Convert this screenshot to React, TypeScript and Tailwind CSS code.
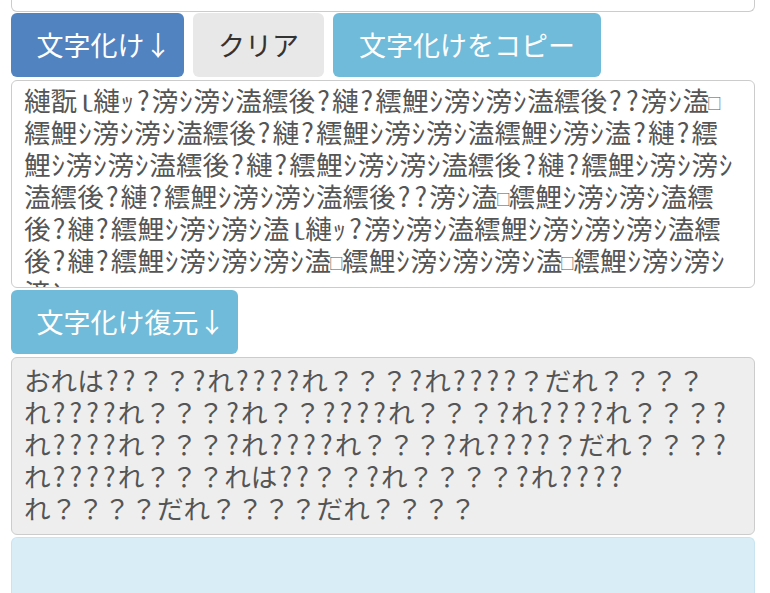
import type { ReactNode } from 'react';

const garbled = [
  '縺翫ｌ縺ｯ?滂ｼ滂ｼ溘繧後?縺?繧鯉ｼ滂ｼ滂ｼ溘繧後??滂ｼ溘□',
  '繧鯉ｼ滂ｼ滂ｼ溘繧後?縺?繧鯉ｼ滂ｼ滂ｼ溘繧鯉ｼ滂ｼ溘?縺?繧',
  '鯉ｼ滂ｼ滂ｼ溘繧後?縺?繧鯉ｼ滂ｼ滂ｼ溘繧後?縺?繧鯉ｼ滂ｼ滂ｼ',
  '溘繧後?縺?繧鯉ｼ滂ｼ滂ｼ溘繧後??滂ｼ溘□繧鯉ｼ滂ｼ滂ｼ溘繧',
  '後?縺?繧鯉ｼ滂ｼ滂ｼ溘ｌ縺ｯ?滂ｼ滂ｼ溘繧鯉ｼ滂ｼ滂ｼ滂ｼ溘繧',
  '後?縺?繧鯉ｼ滂ｼ滂ｼ滂ｼ溘□繧鯉ｼ滂ｼ滂ｼ滂ｼ溘□繧鯉ｼ滂ｼ滂ｼ',
  '滂ｼ',
];

const restored = [
  'おれは??？？?れ????れ？？？?れ????？だれ？？？？',
  'れ????れ？？？?れ？？????れ？？？?れ????れ？？？?',
  'れ????れ？？？?れ????れ？？？?れ????？だれ？？？?',
  'れ????れ？？？れは??？？?れ？？？？?れ????',
  'れ？？？？だれ？？？？だれ？？？？',
];

const isKana = (ch: string) => ch >= '\uFF61' && ch <= '\uFF9F';

// narrow glyphs get fixed cells, matching the phone font's advance widths
function line(text: string): ReactNode[] {
  return [...text].map((ch, i) => {
    if (ch === '?') return <span key={i} className="inline-block w-[16.8px] text-center">?</span>;
    if (isKana(ch)) return <span key={i} className="inline-block w-[15.2px] text-center">{ch}</span>;
    if (ch === 'ｌ')
      return (
        <span key={i} className="inline-block w-[16px]">
          <span className="inline-block w-[1em] -translate-x-[5px] scale-y-[0.8] origin-bottom">ｌ</span>
        </span>
      );
    if (ch === '□')
      return (
        <span key={i} className="inline-block w-[11px]">
          <span className="inline-block w-[1em] -translate-x-[8px] scale-[0.55] origin-[50%_72%]">□</span>
        </span>
      );
    return ch;
  });
}

function Arrow() {
  return <span className="inline-block w-[14px] text-center">↓</span>;
}

export default function App() {
  return (
    <div className="min-h-[593px] bg-white pl-[11px] pr-[15px] font-['Noto_Sans_CJK_JP',sans-serif] text-[27px] leading-[32px]">
      {/* bottom edge of the source textarea above */}
      <div className="h-[12px] rounded-b-md border border-t-0 border-[#cccccc] bg-white" />

      <div className="mt-px flex gap-[9px]">
        <button type="button" className="h-[64px] w-[173px] rounded-md bg-[#5183c1] text-white">
          文字化け<Arrow />
        </button>
        <button type="button" className="h-[64px] w-[131px] rounded-md bg-[#e8e8e8] text-[#333333]">
          クリア
        </button>
        <button type="button" className="h-[64px] w-[268px] rounded-md bg-[#70bbd9] text-white">
          文字化けをコピー
        </button>
      </div>

      <div className="mt-[3px] h-[208px] overflow-hidden rounded-md border border-[#cccccc] bg-white pl-[12px] pt-[3px] text-[26.6px] text-[#555555]">
        {garbled.map((l, i) => (
          <div key={i} className="whitespace-nowrap">{line(l)}</div>
        ))}
      </div>

      <button type="button" className="mt-[2px] h-[64px] w-[227px] rounded-md bg-[#70bbd9] text-white">
        文字化け復元<Arrow />
      </button>

      <div className="mt-[3px] h-[178px] overflow-hidden rounded-md border border-[#cccccc] bg-[#eeeeee] pl-[12px] pt-[6px] text-[26.6px] text-[#555555]">
        {restored.map((l, i) => (
          <div key={i} className="whitespace-nowrap">{line(l)}</div>
        ))}
      </div>

      <div className="mt-[2px] h-[70px] rounded-t-md border border-b-0 border-[#c9e4f0] bg-[#d9edf7]" />
    </div>
  );
}
